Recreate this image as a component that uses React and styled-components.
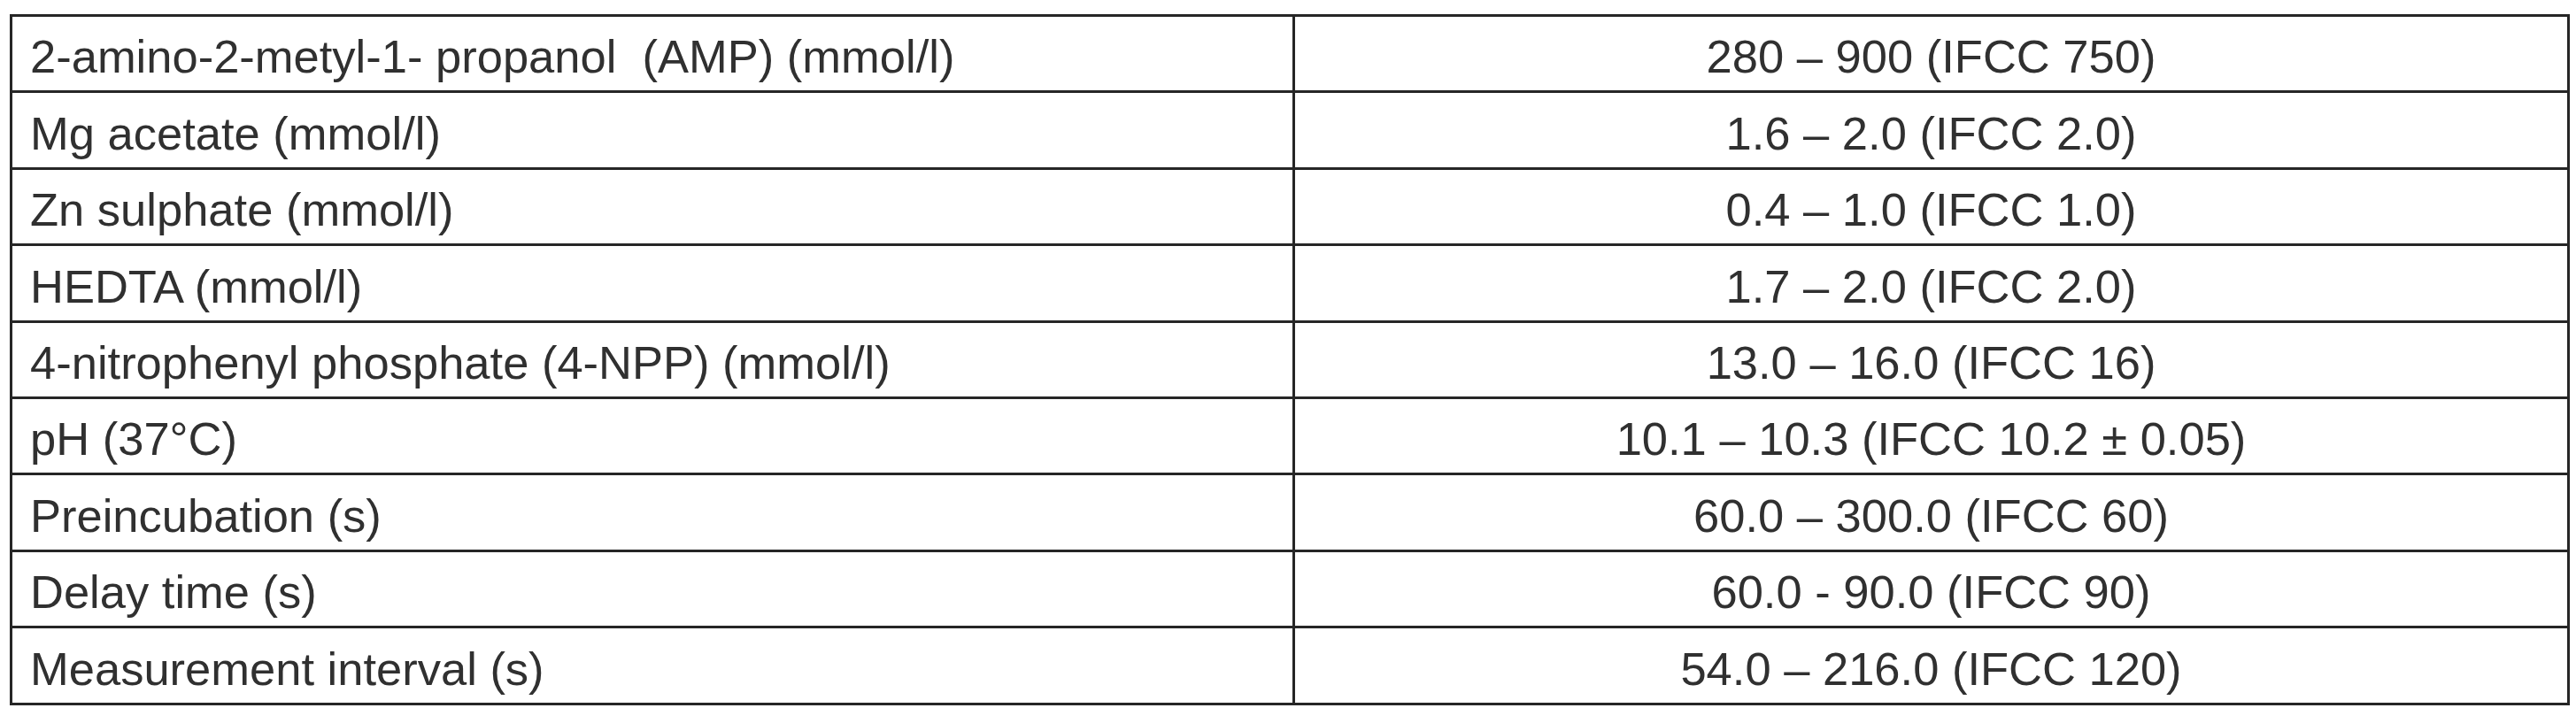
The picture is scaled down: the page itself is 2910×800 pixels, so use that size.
import React from "react";
import styled, { createGlobalStyle } from "styled-components";

const Global = createGlobalStyle`
  html, body { margin: 0; padding: 0; background: #ffffff; }
  body { font-family: "Liberation Sans", Arial, sans-serif; }
`;

const Page = styled.div`
  padding: 16px 0 0 11px;
`;

const Table = styled.table`
  border-collapse: collapse;
  table-layout: fixed;
  width: 2892px;
  font-family: "Liberation Sans", Arial, sans-serif;
  color: #303030;
`;

const Row = styled.tr`
  height: 86.4px;
`;

const Cell = styled.td`
  border: 3px solid #262626;
  padding: 8px 0 0 ${(p) => (p.$center ? "0" : "20px")};
  font-size: 52.5px;
  letter-spacing: 0;
  line-height: 1;
  white-space: pre;
  text-align: ${(p) => (p.$center ? "center" : "left")};
  vertical-align: middle;
`;

const rows = [
  ["2-amino-2-metyl-1- propanol  (AMP) (mmol/l)", "280 – 900 (IFCC 750)"],
  ["Mg acetate (mmol/l)", "1.6 – 2.0 (IFCC 2.0)"],
  ["Zn sulphate (mmol/l)", "0.4 – 1.0 (IFCC 1.0)"],
  ["HEDTA (mmol/l)", "1.7 – 2.0 (IFCC 2.0)"],
  ["4-nitrophenyl phosphate (4-NPP) (mmol/l)", "13.0 – 16.0 (IFCC 16)"],
  ["pH (37°C)", "10.1 – 10.3 (IFCC 10.2 ± 0.05)"],
  ["Preincubation (s)", "60.0 – 300.0 (IFCC 60)"],
  ["Delay time (s)", "60.0 - 90.0 (IFCC 90)"],
  ["Measurement interval (s)", "54.0 – 216.0 (IFCC 120)"],
];

export default function App() {
  return (
    <>
      <Global />
      <Page>
        <Table>
          <colgroup>
            <col style={{ width: "1449px" }} />
            <col />
          </colgroup>
          <tbody>
            {rows.map(([k, v], i) => (
              <Row key={i}>
                <Cell>{k}</Cell>
                <Cell $center>{v}</Cell>
              </Row>
            ))}
          </tbody>
        </Table>
      </Page>
    </>
  );
}
